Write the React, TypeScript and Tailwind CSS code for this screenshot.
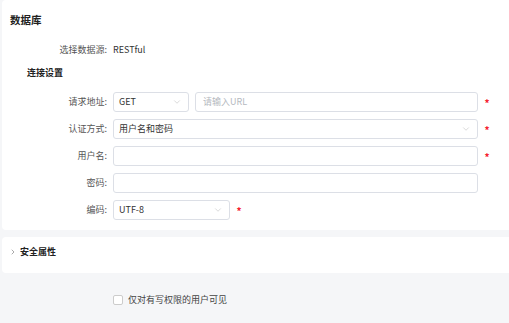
import { ChevronDown, ChevronRight } from 'lucide-react';

const font = { fontFamily: '"Noto Sans CJK SC", "Noto Sans", sans-serif' };

function Star() {
  return <span className="w-[18px] pt-[2px] text-center text-[10px] font-bold leading-none text-[#f5222d]">*</span>;
}

function Label({ text }: { text: string }) {
  return <div className="w-[111px] shrink-0 pr-[6px] text-right text-[9px] text-[#555]">{text}:</div>;
}

function Select({ value, className }: { value: string; className: string }) {
  return (
    <div className={`flex h-[20px] items-center justify-between rounded-[3px] border border-[#dcdfe6] bg-white pl-[5px] pr-[6px] text-[9px] text-[#333] ${className}`}>
      <span>{value}</span>
      <ChevronDown className="h-[10px] w-[10px] text-[#bbb]" strokeWidth={1.3} />
    </div>
  );
}

function Input({ placeholder, className }: { placeholder?: string; className: string }) {
  return (
    <div className={`flex h-[20px] items-center rounded-[3px] border border-[#dcdfe6] bg-white pl-[7px] text-[9px] text-[#b5b9c0] ${className}`}>
      {placeholder}
    </div>
  );
}

export default function App() {
  return (
    <div className="h-[323px] w-[509px] overflow-hidden bg-[#f5f6f8] pl-[2px]" style={font}>
      <div className="h-[230px] rounded-l-[4px] bg-white pt-[11px]">
        <div className="pl-[8px] text-[10.5px] font-bold leading-[18px] text-[#222]">数据库</div>
        <div className="mt-[14px] flex items-center text-[9px] leading-[14px]">
          <Label text="选择数据源" />
          <span className="text-[#333]">RESTful</span>
        </div>
        <div className="mt-[9px] pl-[25px] text-[9px] font-bold leading-[14px] text-[#222]">连接设置</div>
        <div className="mt-[12px] flex flex-col gap-[7px]">
          <div className="flex items-center">
            <Label text="请求地址" />
            <Select value="GET" className="w-[76px]" />
            <Input placeholder="请输入URL" className="ml-[6px] w-[283px]" />
            <Star />
          </div>
          <div className="flex items-center">
            <Label text="认证方式" />
            <Select value="用户名和密码" className="w-[365px]" />
            <Star />
          </div>
          <div className="flex items-center">
            <Label text="用户名" />
            <Input className="w-[365px]" />
            <Star />
          </div>
          <div className="flex items-center">
            <Label text="密码" />
            <Input className="w-[365px]" />
          </div>
          <div className="flex items-center">
            <Label text="编码" />
            <Select value="UTF-8" className="w-[117px]" />
            <Star />
          </div>
        </div>
      </div>
      <div className="mt-[7px] h-[36px] rounded-l-[4px] bg-white pt-[8px]">
        <div className="flex items-center gap-[3px] pl-[7px] leading-[14px]">
          <ChevronRight className="h-[8px] w-[8px] text-[#555]" strokeWidth={1.5} />
          <span className="text-[9px] font-bold text-[#222]">安全属性</span>
        </div>
      </div>
      <div className="mt-[20px] flex items-center pl-[111px]">
        <div className="h-[10px] w-[10px] rounded-[2px] border border-[#ccc] bg-white" />
        <span className="ml-[5px] text-[9px] text-[#444]">仅对有写权限的用户可见</span>
      </div>
    </div>
  );
}
